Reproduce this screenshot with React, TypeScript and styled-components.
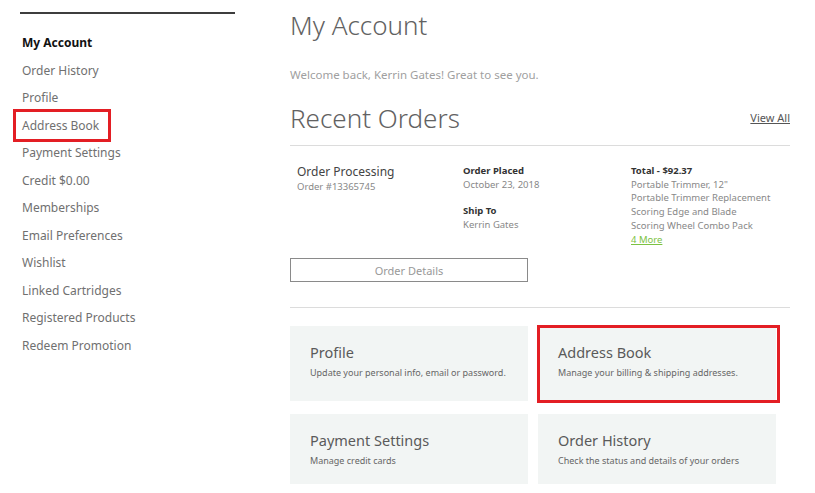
import React from "react";
import styled, { createGlobalStyle, css } from "styled-components";

const GlobalStyle = createGlobalStyle`
    html, body {
        margin: 0;
        padding: 0;
        background: #fff;
        font-family: "Noto Sans", "Liberation Sans", sans-serif;
        color: #555;
    }
`;

const red = "#e31e24";

const highlight = css`
    position: relative;
    &::after {
        content: "";
        position: absolute;
        border: 3px solid ${red};
        pointer-events: none;
    }
`;

const Page = styled.div`
    display: flex;
    gap: 55px;
    padding: 12px 0 0 20px;
    width: 815px;
    box-sizing: border-box;
`;

const Sidebar = styled.nav`
    width: 215px;
    flex-shrink: 0;
    border-top: 2px solid #3d3d3d;
    padding-top: 15px;
`;

const NavItem = styled.div<{active?: boolean, boxed?: boolean}>`
    padding-left: 2px;
    font-size: 12px;
    line-height: 27.5px;
    color: ${props => props.active ? "#111" : "#707070"};
    font-weight: ${props => props.active ? 700 : 400};
    ${props => props.boxed && css`
        ${highlight}
        &::after {
            left: -7px;
            top: -3px;
            width: 92px;
            height: 27px;
        }
    `}
`;

const Main = styled.main`
    width: 500px;
    display: flex;
    flex-direction: column;
`;

const PageTitle = styled.h1`
    margin: 0;
    font-size: 26px;
    font-weight: 300;
    line-height: 26px;
    color: #626262;
`;

const Welcome = styled.p`
    margin: 30px 0 0;
    font-size: 11.5px;
    color: #a0a0a0;
    line-height: 14px;
`;

const SectionHead = styled.div`
    display: flex;
    justify-content: space-between;
    align-items: center;
    margin-top: 21px;
    padding-bottom: 12px;
    border-bottom: 1px solid #dcdcdc;
`;

const SectionTitle = styled.h2`
    margin: 0;
    font-size: 26px;
    font-weight: 300;
    line-height: 30px;
    color: #626262;
`;

const TextLink = styled.a<{green?: boolean}>`
    display: inline-block;
    font-size: ${props => props.green ? "9.5px" : "11px"};
    line-height: ${props => props.green ? "13.7px" : "14px"};
    color: ${props => props.green ? "#7cc242" : "#555"};
    text-decoration: underline;
    cursor: pointer;
`;

const OrderRow = styled.div`
    display: grid;
    grid-template-columns: 166px 168px 1fr;
    padding: 18px 0 0 7px;
`;

const Column = styled.div`
    display: flex;
    flex-direction: column;
    align-items: flex-start;
`;

const OrderStatus = styled.div`
    font-size: 12px;
    line-height: 16px;
    color: #444;
`;

const Small = styled.div<{strong?: boolean, gapTop?: number}>`
    font-size: 9.5px;
    line-height: 13.7px;
    color: ${props => props.strong ? "#333" : "#888"};
    font-weight: ${props => props.strong ? 700 : 400};
    ${props => props.gapTop && `margin-top: ${props.gapTop}px;`}
`;

const OutlineButton = styled.button`
    display: block;
    margin-top: 12px;
    width: 238px;
    height: 24px;
    border: 1px solid #8a8a8a;
    background: #fff;
    font-family: inherit;
    font-size: 11px;
    color: #999;
    cursor: pointer;
`;

const Divider = styled.hr`
    margin: 25px 0 0;
    border: none;
    border-top: 1px solid #dcdcdc;
`;

const CardGrid = styled.div`
    display: grid;
    grid-template-columns: 238px 238px;
    column-gap: 10px;
    row-gap: 13px;
    margin-top: 18px;
`;

const Card = styled.div<{boxed?: boolean, tall?: boolean}>`
    background: #f2f5f4;
    padding: 17px 20px 0;
    height: ${props => props.tall ? "75px" : "70px"};
    box-sizing: border-box;
    ${props => props.boxed && css`
        ${highlight}
        &::after {
            left: -1px;
            top: -1px;
            right: -4px;
            bottom: -2px;
        }
    `}
`;

const CardTitle = styled.div`
    font-size: 14.5px;
    line-height: 18px;
    color: #5a5a5a;
`;

const CardText = styled.div`
    margin-top: 5px;
    font-size: 9px;
    color: #666;
    white-space: nowrap;
`;

const navItems = [
    "Order History",
    "Profile",
    "Address Book",
    "Payment Settings",
    "Credit $0.00",
    "Memberships",
    "Email Preferences",
    "Wishlist",
    "Linked Cartridges",
    "Registered Products",
    "Redeem Promotion",
];

const items = [
    "Portable Trimmer, 12\"",
    "Portable Trimmer Replacement",
    "Scoring Edge and Blade",
    "Scoring Wheel Combo Pack",
];

const cards = [
    {title: "Profile", text: "Update your personal info, email or password."},
    {title: "Address Book", text: "Manage your billing & shipping addresses.", boxed: true},
    {title: "Payment Settings", text: "Manage credit cards"},
    {title: "Order History", text: "Check the status and details of your orders"},
];

export default function App() {
    return (
        <>
            <GlobalStyle/>
            <Page>
                <Sidebar>
                    <NavItem active>My Account</NavItem>
                    {navItems.map(label => (
                        <NavItem key={label} boxed={label === "Address Book"}>{label}</NavItem>
                    ))}
                </Sidebar>
                <Main>
                    <PageTitle>My Account</PageTitle>
                    <Welcome>Welcome back, Kerrin Gates! Great to see you.</Welcome>
                    <SectionHead>
                        <SectionTitle>Recent Orders</SectionTitle>
                        <TextLink>View All</TextLink>
                    </SectionHead>
                    <OrderRow>
                        <Column>
                            <OrderStatus>Order Processing</OrderStatus>
                            <Small>Order #13365745</Small>
                        </Column>
                        <Column>
                            <Small strong>Order Placed</Small>
                            <Small>October 23, 2018</Small>
                            <Small strong gapTop={13}>Ship To</Small>
                            <Small>Kerrin Gates</Small>
                        </Column>
                        <Column>
                            <Small strong>Total - $92.37</Small>
                            {items.map(item => <Small key={item}>{item}</Small>)}
                            <TextLink green>4 More</TextLink>
                        </Column>
                    </OrderRow>
                    <OutlineButton>Order Details</OutlineButton>
                    <Divider/>
                    <CardGrid>
                        {cards.map((card, i) => (
                            <Card key={card.title} boxed={card.boxed} tall={i < 2}>
                                <CardTitle>{card.title}</CardTitle>
                                <CardText>{card.text}</CardText>
                            </Card>
                        ))}
                    </CardGrid>
                </Main>
            </Page>
        </>
    );
}
